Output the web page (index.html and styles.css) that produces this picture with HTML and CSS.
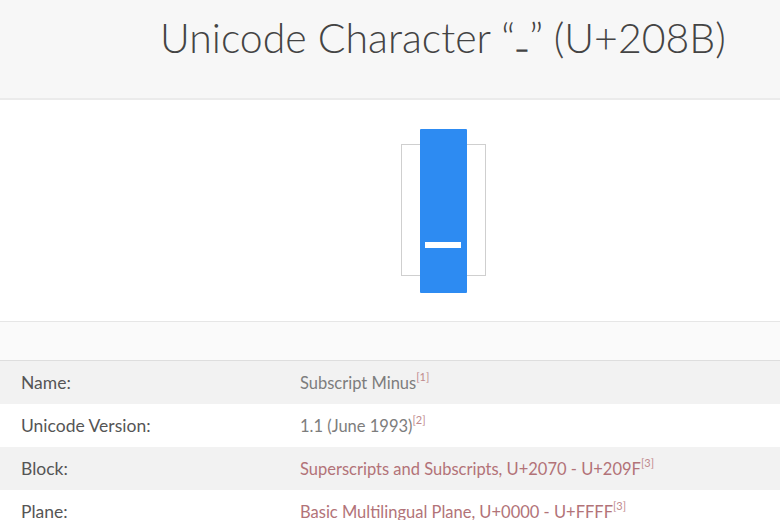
FILE: index.html
```html
<!DOCTYPE html>
<html>
<head>
<meta charset="utf-8">
<link rel="stylesheet" href="styles.css">
</head>
<body>
<header class="top">
  <h1 class="title">Unicode Character “<span class="ch">₋</span>” (U+208B)</h1>
</header>
<section class="glyph-area">
  <div class="glyph-box">
    <div class="glyph-bar">
      <div class="glyph-mark"></div>
    </div>
  </div>
</section>
<div class="spacer"></div>
<table class="info">
  <tr class="odd"><td class="label">Name:</td><td class="value">Subscript Minus<sup class="ref">[1]</sup></td></tr>
  <tr><td class="label">Unicode Version:</td><td class="value">1.1 (June 1993)<sup class="ref">[2]</sup></td></tr>
  <tr class="odd"><td class="label">Block:</td><td class="value"><a class="link">Superscripts and Subscripts, U+2070 - U+209F</a><sup class="ref">[3]</sup></td></tr>
  <tr><td class="label">Plane:</td><td class="value"><a class="link">Basic Multilingual Plane, U+0000 - U+FFFF</a><sup class="ref">[3]</sup></td></tr>
</table>
</body>
</html>
```
FILE: styles.css
```css
html, body {
  margin: 0;
  padding: 0;
  background: #ffffff;
  font-family: Lato, "Open Sans", sans-serif;
  overflow: hidden;
}
.top {
  height: 98px;
  background: #f7f7f7;
  border-bottom: 2px solid #ebebeb;
}
.title {
  margin: 0;
  padding: 13px 0 0 160px;
  font-family: Lato, sans-serif;
  font-weight: 300;
  font-size: 41px;
  line-height: 50px;
  color: #444;
  white-space: nowrap;
}
.ch {
  font-family: "DejaVu Sans", sans-serif;
  font-weight: 300;
}
.glyph-area {
  height: 221px;
  display: flex;
  justify-content: flex-start;
  padding-left: 401px;
  border-bottom: 1px solid #e6e6e6;
}
.glyph-box {
  margin-top: 44px;
  width: 83px;
  height: 130px;
  border: 1px solid #cfcfcf;
  position: relative;
}
.glyph-bar {
  position: absolute;
  left: 18px;
  top: -16px;
  width: 47px;
  height: 164px;
  background: #2d8bf2;
  border-radius: 1px;
}
.glyph-mark {
  position: absolute;
  left: 5px;
  top: 113px;
  width: 36px;
  height: 6px;
  background: #ffffff;
}
.spacer {
  height: 38px;
  background: #fafafa;
  border-bottom: 1px solid #dedede;
}
.info {
  width: 100%;
  border-collapse: collapse;
}
.info tr {
  height: 43px;
}
.info tr.odd {
  background: #f2f2f2;
}
.info td {
  padding: 0;
  vertical-align: middle;
}
.label {
  width: 279px;
  padding-left: 21px !important;
  color: #555;
  font-size: 17.5px;
}
.value {
  color: #7d7d7d;
  font-size: 16.5px;
  font-weight: 400;
}
.link {
  color: #b27378;
  text-decoration: none;
}
.ref {
  font-size: 11px;
  color: #c08a8d;
  vertical-align: 8px;
  line-height: 0;
}
```
